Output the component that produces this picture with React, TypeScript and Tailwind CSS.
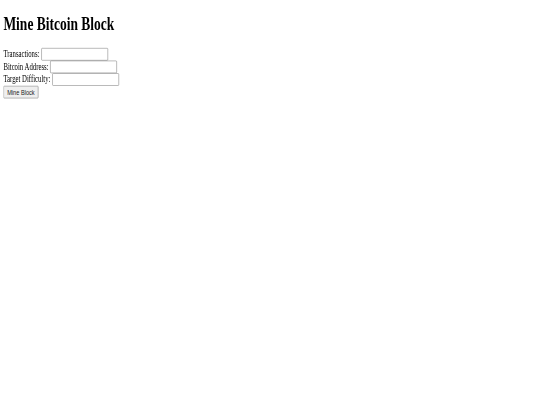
export default function App() {
  return (
    <div className="w-[540px] h-[405px] overflow-hidden bg-white">
      <div className="flow-root w-[1280px] h-[675px] origin-top-left scale-x-[0.421875] scale-y-[0.6] px-2 text-base text-black font-['Liberation_Serif','Times_New_Roman',serif]">
        <h1 className="mt-[21.44px] mb-[21.44px] text-[32px] font-bold leading-[normal]">Mine Bitcoin Block</h1>
        <form className="leading-[normal]" onSubmit={(e) => e.preventDefault()}>
          <label>Transactions:</label>{" "}
          <input
            type="text"
            className="w-[158px] h-[21px] border border-[#767676] rounded-[2px] px-[2px] py-[1px] bg-white text-[13.333px] font-['Liberation_Sans',Arial,sans-serif] align-baseline"
          />
          <br />
          <label>Bitcoin Address:</label>{" "}
          <input
            type="text"
            className="w-[158px] h-[21px] border border-[#767676] rounded-[2px] px-[2px] py-[1px] bg-white text-[13.333px] font-['Liberation_Sans',Arial,sans-serif] align-baseline"
          />
          <br />
          <label>Target Difficulty:</label>{" "}
          <input
            type="text"
            className="w-[158px] h-[21px] border border-[#767676] rounded-[2px] px-[2px] py-[1px] bg-white text-[13.333px] font-['Liberation_Sans',Arial,sans-serif] align-baseline"
          />
          <br />
          <button
            type="submit"
            className="h-[21px] border border-[#767676] rounded-[2px] px-[8px] py-[1px] bg-[#efefef] text-[13.333px] text-[#222] font-['Liberation_Sans',Arial,sans-serif] leading-[normal]"
          >
            Mine Block
          </button>
        </form>
      </div>
    </div>
  );
}
